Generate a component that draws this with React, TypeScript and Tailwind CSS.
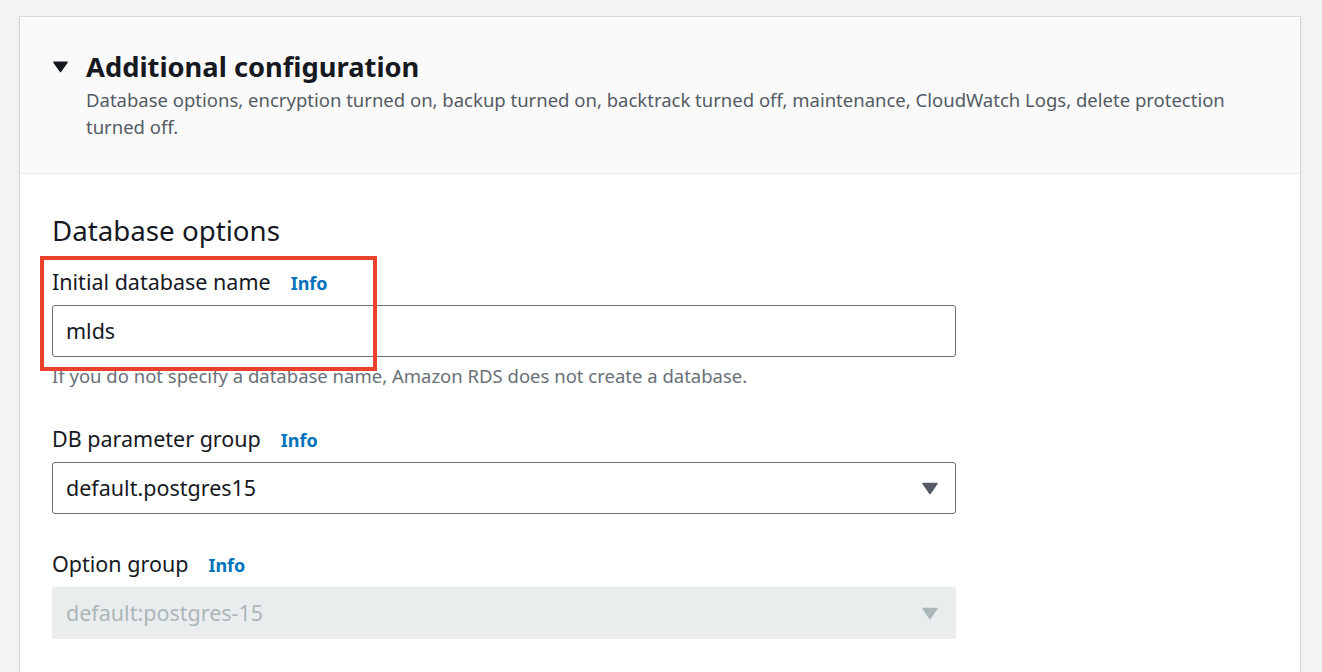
import React from 'react';

const font = { fontFamily: '"Noto Sans", "Open Sans", Arial, sans-serif' };

function Caret({ className }: { className: string }) {
  return (
    <svg viewBox="0 0 16 12" className={className} fill="currentColor">
      <path d="M1 1 H15 L8 11 Z" strokeLinejoin="round" stroke="currentColor" strokeWidth="1.5" />
    </svg>
  );
}

function Label({ text }: { text: string }) {
  return (
    <div className="flex items-baseline gap-[20px] text-[21.5px] leading-[28px] text-[#16191f]">
      <span>{text}</span>
      <span className="text-[18px] font-bold text-[#0073bb]">Info</span>
    </div>
  );
}

export default function App() {
  return (
    <div className="min-h-screen bg-[#f2f3f3] pl-[20px] pr-[22px] pt-[17px]" style={font}>
      <div className="bg-white shadow-[0_0_0_1px_#d5dbdb,0_1px_2px_rgba(0,28,36,0.3)] min-h-[660px]">
        {/* Header */}
        <div className="h-[157px] bg-[#fafafa] border-b border-[#eaeded] pl-[33px] pr-[60px] pt-[33px]">
          <div className="flex items-center gap-[18px]">
            <Caret className="w-[15px] h-[12px] text-[#16191f]" />
            <h2 className="text-[27.3px] leading-[34px] font-bold text-[#16191f]">Additional configuration</h2>
          </div>
          <p className="ml-[33px] mt-[2px] text-[18.5px] leading-[27px] text-[#545b64]">
            Database options, encryption turned on, backup turned on, backtrack turned off, maintenance, CloudWatch Logs, delete
            protection turned off.
          </p>
        </div>

        {/* Body */}
        <div className="pl-[32px] pt-[38px] pb-[30px]">
          <h3 className="text-[27.7px] leading-[36px] text-[#16191f]">Database options</h3>

          <div className="relative mt-[20px] w-[904px]">
            <div className="absolute left-[-12px] top-[-12px] w-[337px] h-[115px] border-[4px] border-[#e8412c]" />
            <Label text="Initial database name" />
            <div className="mt-[8px] h-[52px] rounded-[3px] border border-[#687078] flex items-center px-[13px] text-[21.5px] text-[#16191f]">
              mlds
            </div>
            <p className="mt-[7px] text-[18.5px] leading-[24px] text-[#687078]">
              If you do not specify a database name, Amazon RDS does not create a database.
            </p>
          </div>

          <div className="mt-[37px] w-[904px]">
            <Label text="DB parameter group" />
            <div className="mt-[8px] h-[52px] rounded-[3px] border border-[#687078] flex items-center justify-between pl-[13px] pr-[17px] text-[21.5px] text-[#16191f]">
              <span>default.postgres15</span>
              <Caret className="w-[16px] h-[13px] text-[#545b64]" />
            </div>
          </div>

          <div className="mt-[36px] w-[904px]">
            <Label text="Option group" />
            <div className="mt-[8px] h-[52px] rounded-[3px] bg-[#eaeded] flex items-center justify-between pl-[14px] pr-[18px] text-[21.5px] text-[#aab7b8]">
              <span>default:postgres-15</span>
              <Caret className="w-[16px] h-[13px] text-[#aab7b8]" />
            </div>
          </div>
        </div>
      </div>
    </div>
  );
}
